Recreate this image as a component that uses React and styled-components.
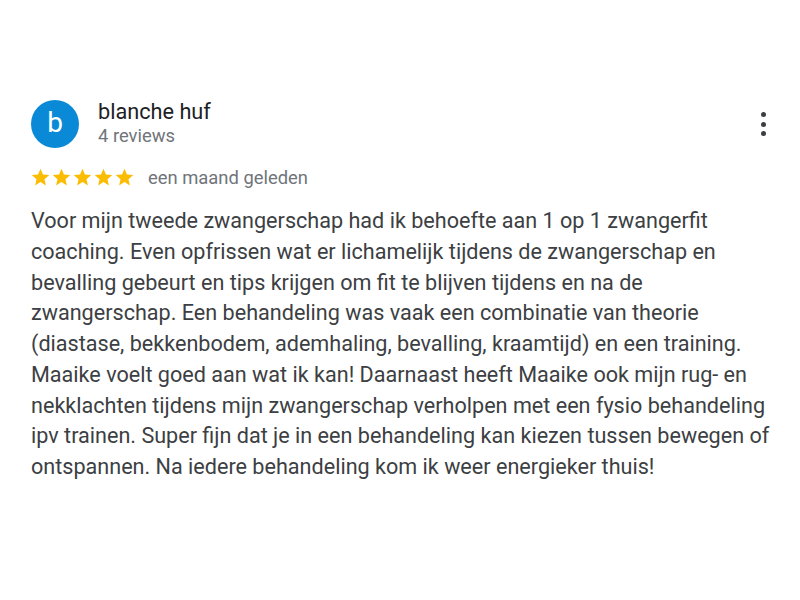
import React from "react";
import styled, { createGlobalStyle } from "styled-components";

const GlobalStyle = createGlobalStyle`
    body {
        margin: 0;
        background: #ffffff;
        font-family: Roboto, "Liberation Sans", Arial, sans-serif;
    }
`;

const review = {
    initial: "b",
    name: "blanche huf",
    meta: "4 reviews",
    rating: 5,
    when: "een maand geleden",
    text: "Voor mijn tweede zwangerschap had ik behoefte aan 1 op 1 zwangerfit coaching. Even opfrissen wat er lichamelijk tijdens de zwangerschap en bevalling gebeurt en tips krijgen om fit te blijven tijdens en na de zwangerschap. Een behandeling was vaak een combinatie van theorie (diastase, bekkenbodem, ademhaling, bevalling, kraamtijd) en een training. Maaike voelt goed aan wat ik kan! Daarnaast heeft Maaike ook mijn rug- en nekklachten tijdens mijn zwangerschap verholpen met een fysio behandeling ipv trainen. Super fijn dat je in een behandeling kan kiezen tussen bewegen of ontspannen. Na iedere behandeling kom ik weer energieker thuis!",
};

function Star() {
    return (
        <svg width="21" height="21" viewBox="0 0 24 24">
            <path
                fill="#fbbc04"
                d="M12 17.27L18.18 21l-1.64-7.03L22 9.24l-7.19-.61L12 2 9.19 8.63 2 9.24l5.46 4.73L5.82 21z"
            />
        </svg>
    );
}

function Review() {
    return (
        <Card>
            <Header>
                <Avatar>{review.initial}</Avatar>
                <Author>
                    <Name>{review.name}</Name>
                    <Meta>{review.meta}</Meta>
                </Author>
                <MoreButton aria-label="Meer">
                    <Dot />
                    <Dot />
                    <Dot />
                </MoreButton>
            </Header>
            <RatingRow>
                <Stars>
                    {Array.from({ length: review.rating }).map((_, i) => (
                        <Star key={i} />
                    ))}
                </Stars>
                <When>{review.when}</When>
            </RatingRow>
            <Body>{review.text}</Body>
        </Card>
    );
}

export default function App() {
    return (
        <>
            <GlobalStyle />
            <Page>
                <Review />
            </Page>
        </>
    );
}

const Page = styled.div`
    width: 800px;
    height: 600px;
    background: #ffffff;
    box-sizing: border-box;
    padding: 100px 9px 0 31px;
`;

const Card = styled.div`
    display: flex;
    flex-direction: column;
`;

const Header = styled.div`
    display: flex;
    align-items: center;
    gap: 19px;
`;

const Avatar = styled.div`
    width: 48px;
    height: 48px;
    margin-top: -1px;
    border-radius: 50%;
    background: #0a8ad6;
    color: #ffffff;
    display: flex;
    align-items: center;
    justify-content: center;
    font-size: 28px;
    line-height: 1;
    padding-bottom: 2px;
    box-sizing: border-box;
`;

const Author = styled.div`
    display: flex;
    flex-direction: column;
    flex: 1;
`;

const Name = styled.div`
    font-size: 21.7px;
    line-height: 24px;
    color: #202124;
`;

const Meta = styled.div`
    font-size: 18.4px;
    line-height: 24px;
    color: #70757a;
`;

const MoreButton = styled.div`
    display: flex;
    flex-direction: column;
    gap: 4.5px;
    padding-right: 25.5px;
`;

const Dot = styled.span`
    width: 5px;
    height: 5px;
    border-radius: 50%;
    background: #3c4043;
`;

const RatingRow = styled.div`
    display: flex;
    align-items: center;
    gap: 13px;
    margin-top: 19px;
`;

const Stars = styled.div`
    display: flex;
    gap: 0;
    margin-left: -1px;
`;

const When = styled.div`
    font-size: 18.4px;
    line-height: 21px;
    color: #70757a;
`;

const Body = styled.p`
    margin: 18px 0 0;
    font-size: 21.6px;
    line-height: 30.75px;
    color: #3c4043;
`;
